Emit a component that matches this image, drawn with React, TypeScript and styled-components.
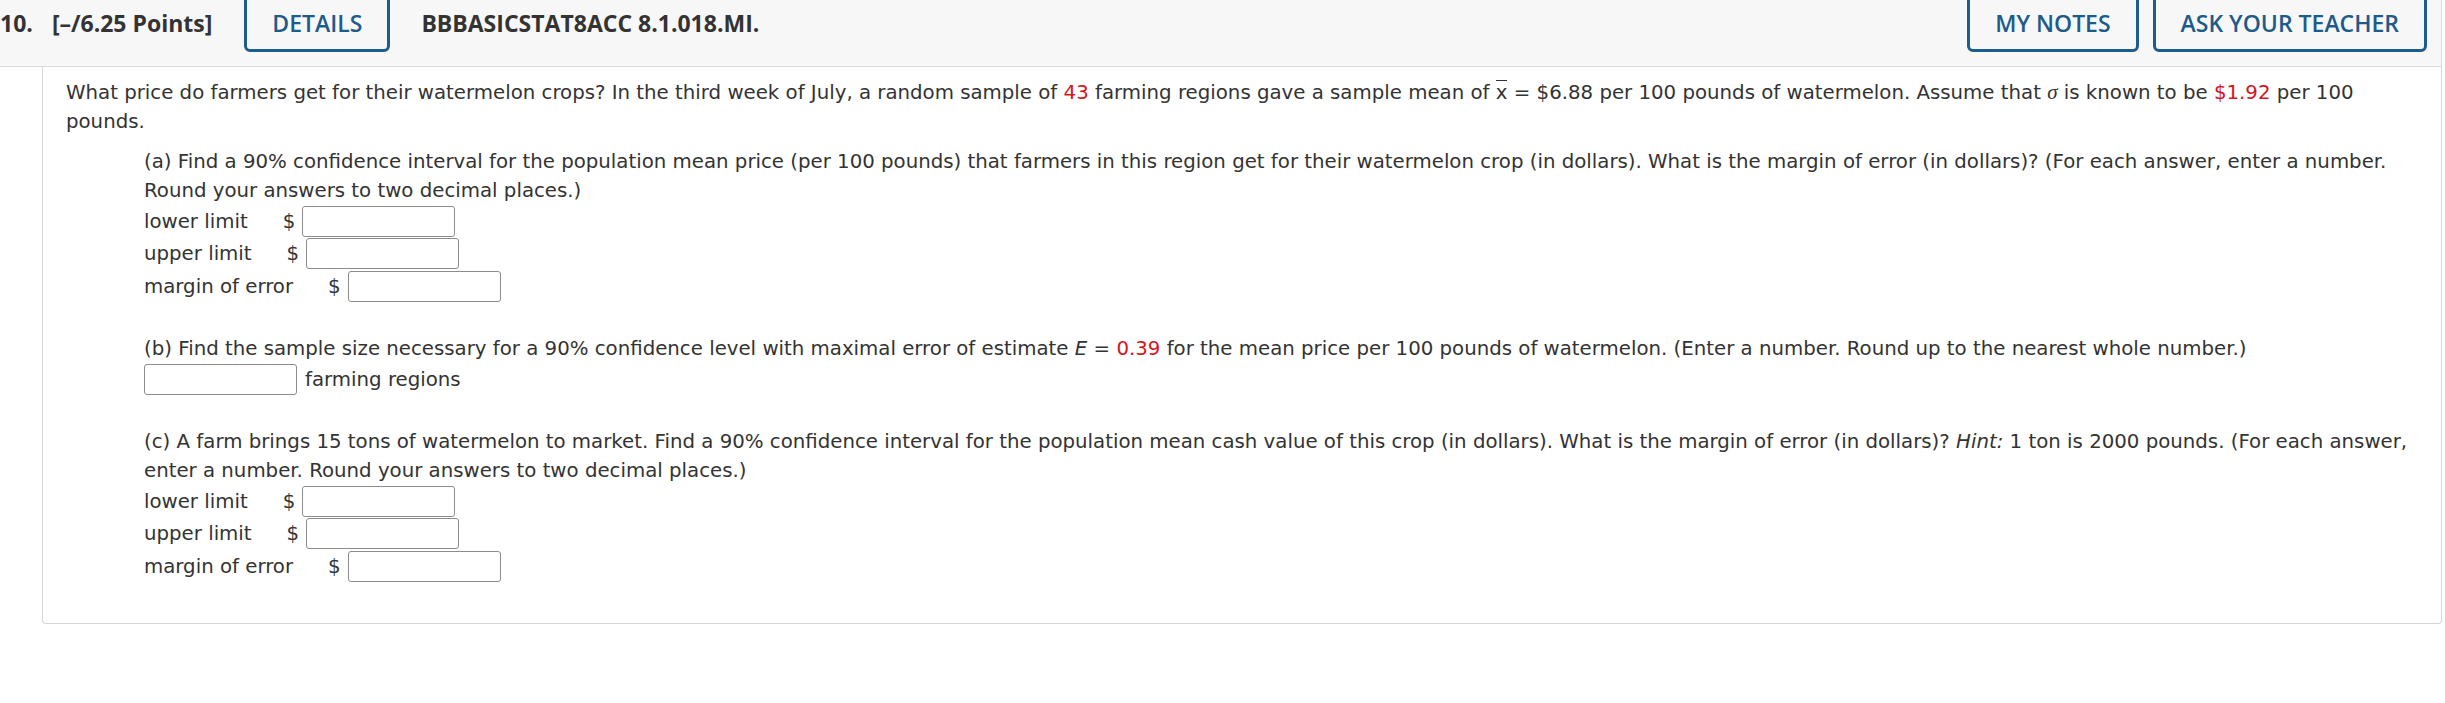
import React from "react";
import styled, { createGlobalStyle } from "styled-components";

const GlobalStyle = createGlobalStyle`
  html, body {
    margin: 0;
    padding: 0;
    background: #ffffff;
  }
  body {
    font-family: "DejaVu Sans", Verdana, sans-serif;
    color: #333333;
  }
  * { box-sizing: border-box; }
`;

const Page = styled.div`
  width: 2445px;
  padding-right: 3px;
`;

const Header = styled.header`
  display: flex;
  align-items: flex-end;
  height: 67px;
  padding: 0 14px 14px 0;
  background: #f7f7f7;
  border-bottom: 1px solid #dcdcdc;
  border-right: 1px solid #dcdcdc;
  overflow: hidden;
  font-family: "Open Sans", "Liberation Sans", sans-serif;
`;

const HeaderText = styled.div<{ $gap?: number }>`
  display: flex;
  align-items: center;
  height: 57px;
  flex-shrink: 0;
  margin-right: ${(p) => p.$gap ?? 0}px;
  font-size: 23px;
  line-height: 1;
  font-weight: 700;
  color: #333333;
  white-space: nowrap;
`;

const HeaderButton = styled.button<{ $gap?: number }>`
  display: flex;
  align-items: center;
  height: 57px;
  flex-shrink: 0;
  margin: 0 ${(p) => p.$gap ?? 0}px 0 0;
  padding: 0 25px;
  background: transparent;
  border: 3px solid #1c5d8c;
  border-radius: 6px;
  font-family: "Open Sans", "Liberation Sans", sans-serif;
  font-size: 23px;
  line-height: 1;
  font-weight: 600;
  color: #1d5b8a;
  white-space: nowrap;
`;

const Spacer = styled.div`
  flex: 1;
`;

const QuestionBox = styled.section`
  margin-left: 42px;
  padding: 11px 4px 40px 23px;
  border: 1px solid #d6d6d6;
  border-top: none;
  border-radius: 0 0 4px 4px;
  font-size: 19.75px;
  line-height: 29px;
  color: #333333;
`;

const Paragraph = styled.p`
  margin: 0;
`;

const Part = styled.div<{ $top: number }>`
  margin: ${(p) => p.$top}px 0 0 78px;
`;

const Red = styled.span`
  color: #d7141c;
`;

const Bar = styled.span`
  border-top: 1.5px solid #333333;
`;

const Sigma = styled.span`
  font-family: "Liberation Serif", "DejaVu Serif", serif;
  font-style: italic;
  font-size: 21px;
`;

const Em = styled.span`
  font-style: italic;
`;

const AnswerRow = styled.div`
  display: flex;
  align-items: center;
  height: 32.5px;
  white-space: nowrap;
`;

const Label = styled.span`
  display: inline-block;
`;

const Dollar = styled.span`
  margin-left: 35px;
  margin-right: 7px;
`;

const AnswerInput = styled.input`
  width: 153px;
  height: 31px;
  padding: 0 6px;
  border: 1px solid #8c8c8c;
  border-radius: 3px;
  background: #ffffff;
  font-family: "DejaVu Sans", Verdana, sans-serif;
  font-size: 18px;
`;

const Unit = styled.span`
  margin-left: 8px;
`;

const limits = ["lower limit", "upper limit", "margin of error"];

function LimitRows() {
  return (
    <>
      {limits.map((l) => (
        <AnswerRow key={l}>
          <Label>{l}</Label>
          <Dollar>$</Dollar>
          <AnswerInput type="text" aria-label={l} />
        </AnswerRow>
      ))}
    </>
  );
}

export default function App() {
  return (
    <Page>
      <GlobalStyle />
      <Header>
        <HeaderText $gap={19}>10.</HeaderText>
        <HeaderText $gap={32}>[–/6.25 Points]</HeaderText>
        <HeaderButton $gap={31}>DETAILS</HeaderButton>
        <HeaderText>BBBASICSTAT8ACC 8.1.018.MI.</HeaderText>
        <Spacer />
        <HeaderButton $gap={14}>MY NOTES</HeaderButton>
        <HeaderButton>ASK YOUR TEACHER</HeaderButton>
      </Header>
      <QuestionBox>
        <Paragraph>
          What price do farmers get for their watermelon crops? In the third
          week of July, a random sample of <Red>43</Red> farming regions gave a
          sample mean of <Bar>x</Bar> = $6.88 per 100 pounds of watermelon.
          Assume that <Sigma>σ</Sigma> is known to be <Red>$1.92</Red> per 100
          <br />
          pounds.
        </Paragraph>
        <Part $top={11}>
          <Paragraph>
            (a) Find a 90% confidence interval for the population mean price
            (per 100 pounds) that farmers in this region get for their
            watermelon crop (in dollars). What is the margin of error (in
            dollars)? (For each answer, enter a number.
            <br />
            Round your answers to two decimal places.)
          </Paragraph>
          <LimitRows />
        </Part>
        <Part $top={31.5}>
          <Paragraph>
            (b) Find the sample size necessary for a 90% confidence level with
            maximal error of estimate <Em>E</Em> = <Red>0.39</Red> for the mean
            price per 100 pounds of watermelon. (Enter a number. Round up to the
            nearest whole number.)
          </Paragraph>
          <AnswerRow>
            <AnswerInput type="text" aria-label="farming regions" />
            <Unit>farming regions</Unit>
          </AnswerRow>
        </Part>
        <Part $top={31.5}>
          <Paragraph>
            (c) A farm brings 15 tons of watermelon to market. Find a 90%
            confidence interval for the population mean cash value of this crop
            (in dollars). What is the margin of error (in dollars)?{" "}
            <Em>Hint:</Em> 1 ton is 2000 pounds. (For each answer,
            <br />
            enter a number. Round your answers to two decimal places.)
          </Paragraph>
          <LimitRows />
        </Part>
      </QuestionBox>
    </Page>
  );
}
